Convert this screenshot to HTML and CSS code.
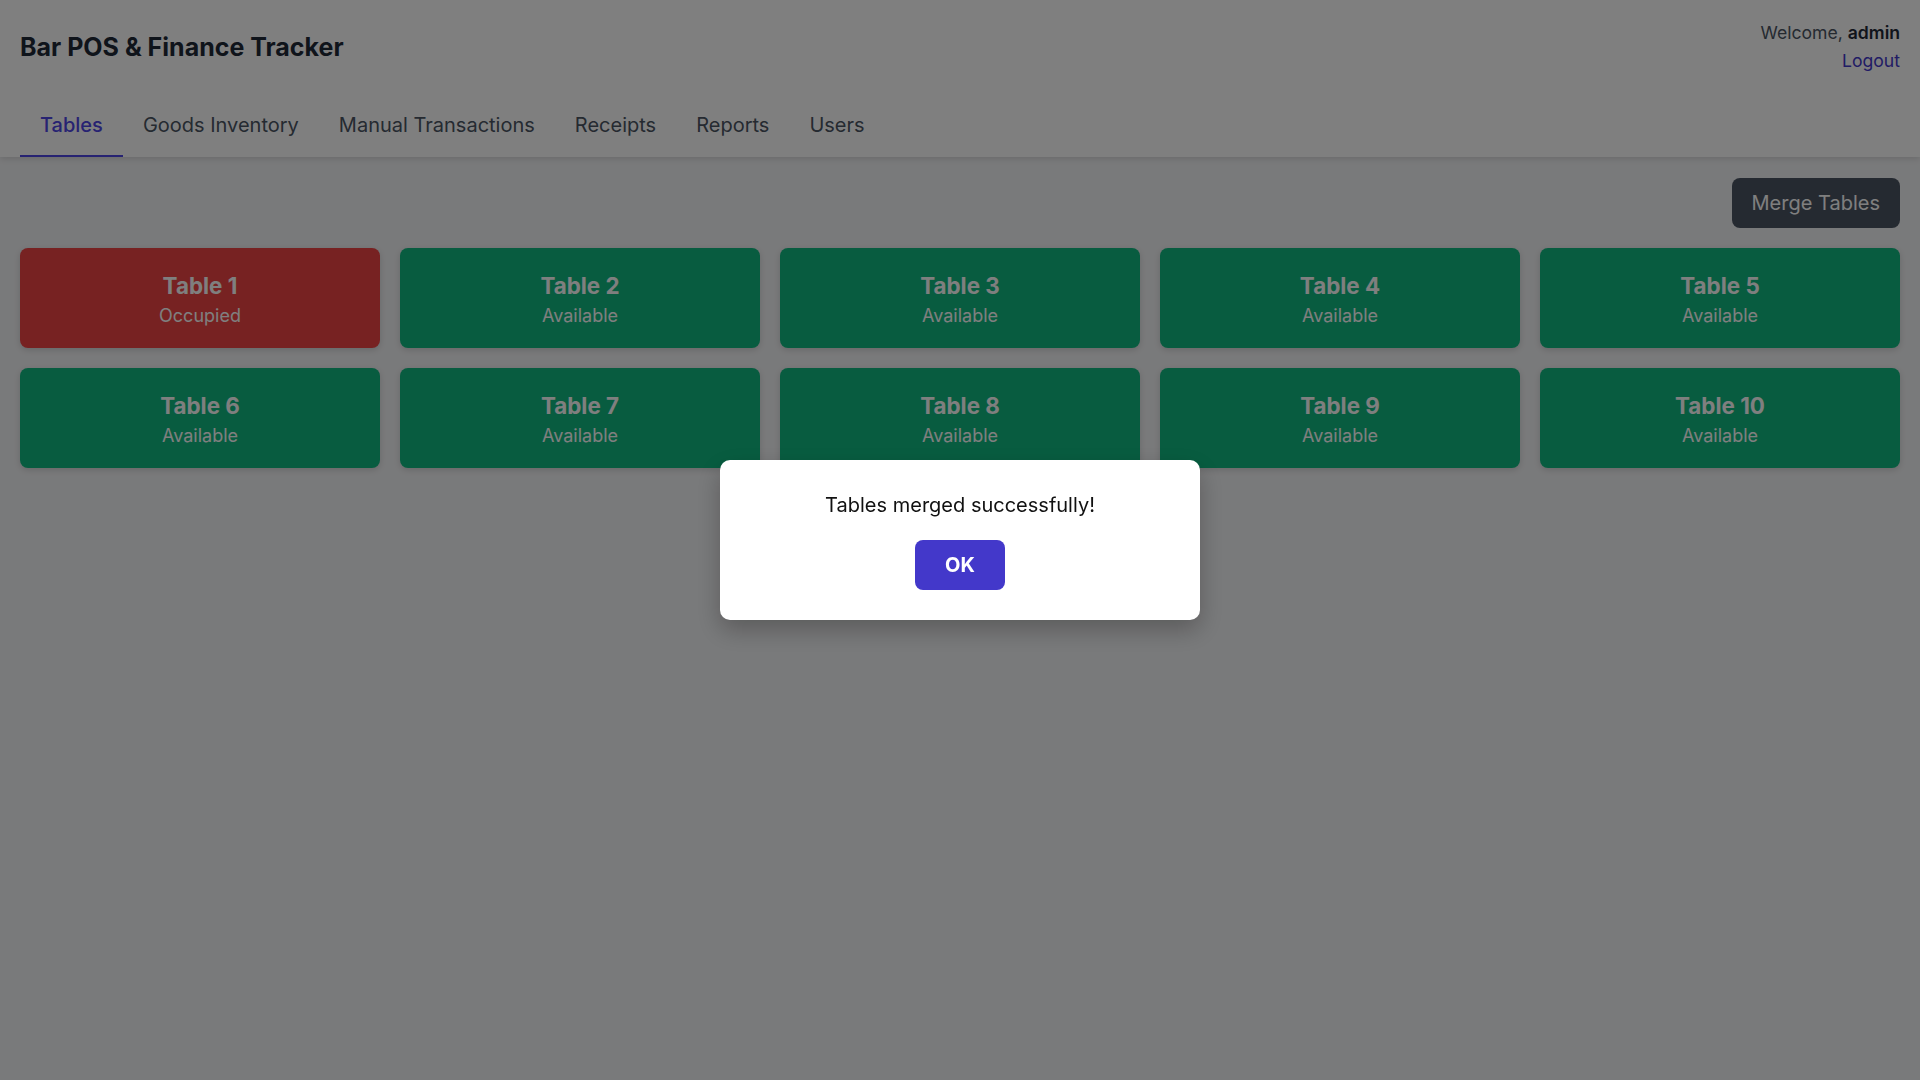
FILE: index.html
```html
<!DOCTYPE html>
<html lang="en">
<head>
<meta charset="utf-8">
<title>Bar POS & Finance Tracker</title>
<link rel="stylesheet" href="styles.css">
</head>
<body>
<header class="header">
  <div class="header-top">
    <h1 class="title">Bar POS &amp; Finance Tracker</h1>
    <div class="user">
      <div class="welcome">Welcome, <strong>admin</strong></div>
      <a class="logout" href="#">Logout</a>
    </div>
  </div>
  <nav class="tabs">
    <a class="tab active" href="#">Tables</a>
    <a class="tab" href="#">Goods Inventory</a>
    <a class="tab" href="#">Manual Transactions</a>
    <a class="tab" href="#">Receipts</a>
    <a class="tab" href="#">Reports</a>
    <a class="tab" href="#">Users</a>
  </nav>
</header>
<main class="main">
  <div class="toolbar">
    <button class="merge-btn">Merge Tables</button>
  </div>
  <div class="grid">
    <div class="tile occupied"><div class="tile-name">Table 1</div><div class="tile-status">Occupied</div></div>
    <div class="tile"><div class="tile-name">Table 2</div><div class="tile-status">Available</div></div>
    <div class="tile"><div class="tile-name">Table 3</div><div class="tile-status">Available</div></div>
    <div class="tile"><div class="tile-name">Table 4</div><div class="tile-status">Available</div></div>
    <div class="tile"><div class="tile-name">Table 5</div><div class="tile-status">Available</div></div>
    <div class="tile"><div class="tile-name">Table 6</div><div class="tile-status">Available</div></div>
    <div class="tile"><div class="tile-name">Table 7</div><div class="tile-status">Available</div></div>
    <div class="tile"><div class="tile-name">Table 8</div><div class="tile-status">Available</div></div>
    <div class="tile"><div class="tile-name">Table 9</div><div class="tile-status">Available</div></div>
    <div class="tile"><div class="tile-name">Table 10</div><div class="tile-status">Available</div></div>
  </div>
</main>
<div class="overlay">
  <div class="modal">
    <p class="modal-msg">Tables merged successfully!</p>
    <button class="ok-btn">OK</button>
  </div>
</div>
</body>
</html>
```
FILE: styles.css
```css
* { box-sizing: border-box; }
html, body { margin: 0; padding: 0; }
body {
  font-family: Inter, "Noto Sans", "Liberation Sans", sans-serif;
  background: #f3f4f6;
  color: #111827;
  min-height: 1080px;
}
.header {
  background: #ffffff;
  box-shadow: 0 2px 6px rgba(0,0,0,0.12);
  padding: 0 20px;
}
.header-top {
  display: flex;
  justify-content: space-between;
  align-items: flex-start;
  padding-top: 19px;
  height: 97px;
}
.title {
  margin: 11px 0 0;
  font-size: 25px;
  line-height: 34px;
  font-weight: 700;
  color: #1f2937;
}
.user {
  text-align: right;
  font-size: 17.6px;
  line-height: 28px;
  color: #4b5563;
}
.user strong { color: #1f2937; font-weight: 600; }
.logout { color: #4338ca; text-decoration: none; }
.tabs {
  display: flex;
}
.tab {
  display: block;
  padding: 14px 20px 16px;
  font-size: 20px;
  line-height: 28px;
  color: #4b5563;
  text-decoration: none;
  border-bottom: 2px solid transparent;
}
.tab.active {
  color: #4f46e5;
  font-weight: 500;
  border-bottom-color: #4f46e5;
}
.main {
  padding: 21px 20px 20px;
}
.toolbar {
  display: flex;
  justify-content: flex-end;
  margin-bottom: 20px;
}
.merge-btn {
  font-family: inherit;
  background: #4b5563;
  color: #ffffff;
  border: 0;
  border-radius: 8px;
  font-size: 20px;
  line-height: 26px;
  padding: 12px 20px;
  height: 50px;
}
.grid {
  display: grid;
  grid-template-columns: repeat(5, 1fr);
  gap: 20px;
}
.tile {
  height: 100px;
  border-radius: 8px;
  background: #10b981;
  color: #ffffff;
  display: flex;
  flex-direction: column;
  align-items: center;
  justify-content: center;
  padding-top: 4px;
  box-shadow: 0 2px 6px rgba(0,0,0,0.15);
}
.tile.occupied { background: #ef4444; }
.tile-name {
  font-size: 22.4px;
  line-height: 32px;
  font-weight: 700;
}
.tile-status {
  font-size: 18px;
  line-height: 28px;
}
.overlay {
  position: fixed;
  inset: 0;
  background: rgba(0,0,0,0.5);
  display: flex;
  align-items: center;
  justify-content: center;
}
.modal {
  width: 480px;
  height: 160px;
  background: #ffffff;
  border-radius: 10px;
  box-shadow: 0 10px 25px rgba(0,0,0,0.25);
  display: flex;
  flex-direction: column;
  align-items: center;
  padding-top: 30px;
}
.modal-msg {
  margin: 0;
  font-size: 20px;
  line-height: 30px;
  color: #111111;
}
.ok-btn {
  margin-top: 20px;
  font-family: inherit;
  width: 90px;
  height: 50px;
  border: 0;
  border-radius: 8px;
  background: #4338ca;
  color: #ffffff;
  font-size: 20px;
  font-weight: 700;
}
```
